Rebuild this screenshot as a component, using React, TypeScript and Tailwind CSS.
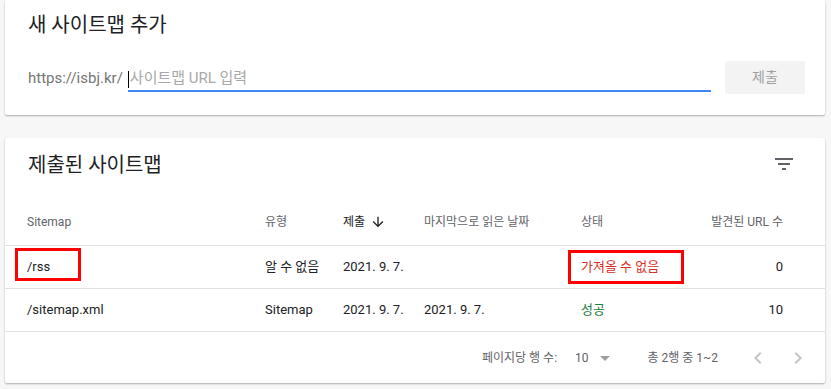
import React from 'react'

const font = { fontFamily: "Roboto, 'Noto Sans CJK KR', sans-serif" }

function FilterIcon() {
  return (
    <svg width="24" height="24" viewBox="0 0 24 24" className="fill-[#5f6368]">
      <path d="M10 18h4v-2h-4v2zM3 6v2h18V6H3zm3 7h12v-2H6v2z" />
    </svg>
  )
}

function ArrowDown() {
  return (
    <svg width="16" height="16" viewBox="0 0 24 24" className="fill-[#202124]">
      <path d="M20 12l-1.41-1.41L13 16.17V4h-2v12.17l-5.58-5.59L4 12l8 8 8-8z" />
    </svg>
  )
}

function Chevron({ dir }: { dir: 'left' | 'right' }) {
  return (
    <svg width="24" height="24" viewBox="0 0 24 24" className="fill-[#c4c4c4]">
      {dir === 'left' ? (
        <path d="M15.41 7.41L14 6l-6 6 6 6 1.41-1.41L10.83 12z" />
      ) : (
        <path d="M10 6L8.59 7.41 13.17 12l-4.58 4.59L10 18l6-6z" />
      )}
    </svg>
  )
}

const rows = [
  { path: '/rss', type: '알 수 없음', submitted: '2021. 9. 7.', read: '', status: '가져올 수 없음', ok: false, count: '0' },
  { path: '/sitemap.xml', type: 'Sitemap', submitted: '2021. 9. 7.', read: '2021. 9. 7.', status: '성공', ok: true, count: '10' },
]

export default function App() {
  return (
    <div className="min-h-screen bg-[#f7f7f7] pl-[5px] pr-[6px] relative" style={font}>
      {/* 새 사이트맵 추가 */}
      <section className="h-[115px] bg-white rounded-[2px] shadow-[0_1px_2px_rgba(0,0,0,0.3)] pl-[23px] pr-[20px] pt-[11px]">
        <h2 className="text-[20px] leading-[28px] text-[#202124]">새 사이트맵 추가</h2>
        <div className="mt-[22px] h-[33px] flex items-center">
          <span className="text-[15px] text-[#757575] mr-[5px] mt-[1px]">https://isbj.kr/</span>
          <div className="relative flex-1 h-[26px] mt-[2px] border-b-2 border-[#4285f4]">
            <input
              className="w-full h-full outline-none text-[15px] text-[#202124] placeholder:text-[#a8a8a8] pl-[2px]"
              placeholder="사이트맵 URL 입력"
            />
            <span className="absolute left-0 top-[5px] w-px h-[17px] bg-black"></span>
          </div>
          <button className="ml-[14px] w-[80px] h-[33px] rounded-[3px] bg-[#f3f3f3] text-[14px] text-[#a0a0a0]">
            제출
          </button>
        </div>
      </section>

      {/* 제출된 사이트맵 */}
      <section className="mt-[23px] h-[245px] bg-white rounded-[2px] shadow-[0_1px_2px_rgba(0,0,0,0.3)] flex flex-col">
        <div className="h-[60px] flex items-start justify-between pl-[23px] pr-[29px] pt-[13px]">
          <h2 className="text-[20px] leading-[28px] text-[#202124]">제출된 사이트맵</h2>
          <button className="mt-[1px]">
            <FilterIcon />
          </button>
        </div>

        <div className="h-[48px] grid grid-cols-[238px_78px_81px_157px_1fr_100px] items-center pl-[22px] pr-[42px] border-b border-[#e0e0e0] text-[12px] text-[#5f6368]">
          <div>Sitemap</div>
          <div>유형</div>
          <div className="flex items-center gap-[5px] text-[#202124]">
            제출 <ArrowDown />
          </div>
          <div>마지막으로 읽은 날짜</div>
          <div>상태</div>
          <div className="text-right">발견된 URL 수</div>
        </div>

        {rows.map((r) => (
          <div
            key={r.path}
            className="h-[43px] grid grid-cols-[238px_78px_81px_157px_1fr_100px] items-center pl-[22px] pr-[42px] border-b border-[#e0e0e0] text-[13px] text-[#202124]"
          >
            <div>{r.path}</div>
            <div>{r.type}</div>
            <div>{r.submitted}</div>
            <div>{r.read}</div>
            <div className={r.ok ? 'text-[#188038]' : 'text-[#d93025]'}>{r.status}</div>
            <div className="text-right">{r.count}</div>
          </div>
        ))}

        <div className="flex-1 flex items-center justify-end pr-[15px] text-[12px] text-[#5f6368]">
          <span>페이지당 행 수:</span>
          <div className="ml-[18px] flex items-center">
            <span>10</span>
            <svg width="24" height="24" viewBox="0 0 24 24" className="ml-[4px] fill-[#9e9e9e]">
              <path d="M7 10l5 5 5-5z" />
            </svg>
          </div>
          <span className="ml-[31px]">총 2행 중 1~2</span>
          <div className="ml-[28px] flex items-center gap-[16px]">
            <Chevron dir="left" />
            <Chevron dir="right" />
          </div>
        </div>
      </section>

      {/* 강조 표시 */}
      <div className="absolute left-[15px] top-[248px] w-[66px] h-[33px] border-[3px] border-[#ff0000]"></div>
      <div className="absolute left-[568px] top-[250px] w-[116px] h-[34px] border-[3px] border-[#ff0000]"></div>
    </div>
  )
}
